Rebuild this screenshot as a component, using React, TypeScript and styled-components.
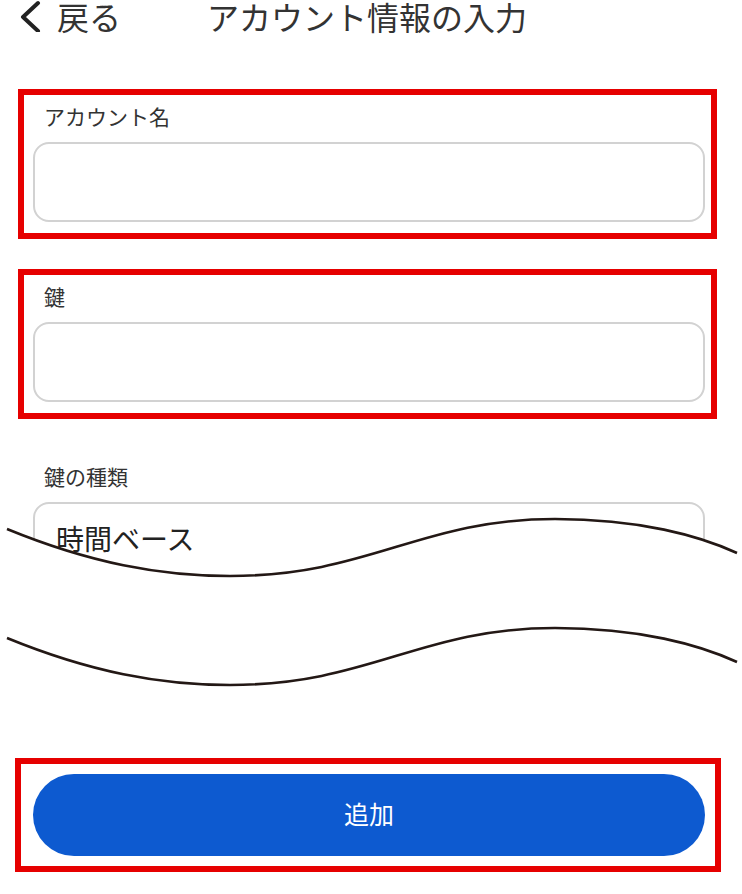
import React from "react";
import styled, { createGlobalStyle } from "styled-components";

const Global = createGlobalStyle`
  html, body { margin: 0; padding: 0; background: #ffffff; }
  body { font-family: "Noto Sans CJK JP", "Noto Sans", sans-serif; color: #333333; }
  * { box-sizing: border-box; }
`;

const Page = styled.div`
  position: relative;
  width: 742px;
  height: 894px;
  overflow: hidden;
  background: #ffffff;
`;

const Header = styled.header`
  display: flex;
  align-items: center;
  height: 36px;
  padding: 0 0 4px 19px;
`;

const BackButton = styled.div`
  display: flex;
  align-items: center;
  gap: 14px;
  font-size: 32px;
  color: #333333;
  line-height: 32px;
`;

const Title = styled.h1`
  margin: 0 0 0 86px;
  font-size: 32px;
  font-weight: 400;
  color: #333333;
  line-height: 32px;
`;

const Form = styled.main`
  display: flex;
  flex-direction: column;
  gap: 30px;
  padding-top: 53px;
`;

const Field = styled.section<{ $highlight?: boolean }>`
  display: flex;
  flex-direction: column;
  margin: 0 25px 0 18px;
  border: 6px solid ${(p) => (p.$highlight ? "#e60000" : "transparent")};
  padding: 6px 6px 11px 9px;
`;

const Label = styled.label`
  font-size: 21px;
  line-height: 30px;
  color: #333333;
  padding-left: 11px;
`;

const Input = styled.div`
  display: flex;
  align-items: center;
  margin-top: 11px;
  height: 80px;
  border: 2px solid #d2d2d2;
  border-radius: 16px;
  padding: 0 0 8px 21px;
  font-size: 28px;
  color: #222222;
`;

const ActionBox = styled.div`
  margin: 129px 21px 0 15px;
  border: 6px solid #e60000;
  padding: 10px 10px 10px 12px;
`;

const AddButton = styled.button`
  display: flex;
  align-items: center;
  justify-content: center;
  width: 100%;
  height: 82px;
  border: none;
  border-radius: 41px;
  padding: 0 0 5px;
  background: #0d5ad0;
  color: #ffffff;
  font-family: "Noto Sans CJK JP", "Noto Sans", sans-serif;
  font-size: 25px;
`;

const WaveOverlay = styled.svg`
  position: absolute;
  top: 0;
  left: 0;
  width: 742px;
  height: 894px;
  pointer-events: none;
`;

const wave = (dy: number) =>
  `M7 ${529 + dy} C90 ${563 + dy} 160 ${576 + dy} 230 ${576 + dy} C370 ${576 + dy} 420 ${519 + dy} 555 ${519 + dy} C640 ${519 + dy} 700 ${536 + dy} 737 ${553 + dy}`;

const curve1 = wave(0);
const curve2 = wave(109);
const fill =
  `M0 526 L7 529 C90 563 160 576 230 576 C370 576 420 519 555 519 C640 519 700 536 737 553 L742 556 ` +
  `L742 665 L737 662 C700 645 640 628 555 628 C420 628 370 685 230 685 C160 685 90 672 7 638 L0 635 Z`;

export default function App() {
  return (
    <Page>
      <Global />
      <Header>
        <BackButton>
          <svg width="24" height="32" viewBox="0 0 24 32" aria-hidden="true">
            <path
              d="M19 3 L4 17 L19 31"
              fill="none"
              stroke="#222"
              strokeWidth="4"
              strokeLinecap="round"
              strokeLinejoin="round"
            />
          </svg>
          <span>戻る</span>
        </BackButton>
        <Title>アカウント情報の入力</Title>
      </Header>
      <Form>
        <Field $highlight>
          <Label>アカウント名</Label>
          <Input />
        </Field>
        <Field $highlight>
          <Label>鍵</Label>
          <Input />
        </Field>
        <Field>
          <Label>鍵の種類</Label>
          <Input>時間ベース</Input>
        </Field>
        <ActionBox>
          <AddButton>追加</AddButton>
        </ActionBox>
      </Form>
      <WaveOverlay viewBox="0 0 742 894" aria-hidden="true">
        <path d={fill} fill="#ffffff" />
        <path d={curve1} fill="none" stroke="#231815" strokeWidth="2.6" />
        <path d={curve2} fill="none" stroke="#231815" strokeWidth="2.6" />
      </WaveOverlay>
    </Page>
  );
}
